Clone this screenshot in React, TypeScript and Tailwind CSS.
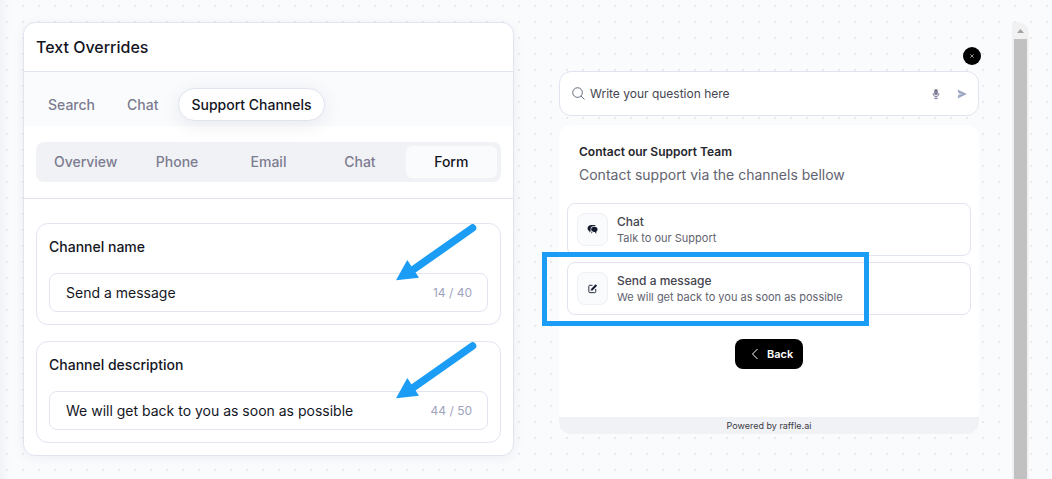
import React, { useState } from 'react';

interface ChannelField {
  id: string;
  label: string;
  value: string;
  max: number;
}

interface SupportChannel {
  id: string;
  title: string;
  description: string;
  icon: React.ReactNode;
  highlighted: boolean;
}

const SECTIONS = ['Search', 'Chat', 'Support Channels'];
const CHANNEL_TABS = ['Overview', 'Phone', 'Email', 'Chat', 'Form'];

const FIELDS: ChannelField[] = [
  { id: 'channel-name', label: 'Channel name', value: 'Send a message', max: 40 },
  {
    id: 'channel-description',
    label: 'Channel description',
    // stored with its trailing space, which counts towards the limit
    value: 'We will get back to you as soon as possible ',
    max: 50,
  },
];

const ChatBubblesIcon = () => (
  <svg viewBox="0 0 12 12" className="size-[11px]" fill="#141a2e" aria-hidden="true">
    <path d="M4.8 1h2.4c1.200 0 2.100.5 2.500 1.300H7.600c-2.200 0-3.700 1.300-3.700 3.300v2.600L2.600 9.400V7.600C1.400 7.100.6 6 .6 4.800.6 2.600 2.400 1 4.800 1Z" />
    <path d="M7.500 2.900h1c1.700 0 3 1.200 3 2.800 0 1.100-.5 2-1.400 2.500v2.300L8.500 8.600h-1C5.800 8.600 4.500 7.400 4.500 5.800s1.300-2.900 3-2.900Z" />
    <path d="M4.700 8.300 6 9.100l-1.300 1.300Z" />
  </svg>
);

const ComposeIcon = () => (
  <svg viewBox="0 0 12 12" className="size-[11px]" fill="none" stroke="#141a2e" aria-hidden="true">
    <path d="M6 2.500H3a1 1 0 0 0-1 1V9.500a1 1 0 0 0 1 1h5.500a1 1 0 0 0 1-1V6.500" />
    <path d="M5.200 7.300 10.200 2.200" strokeWidth="2.200" />
    <path d="M4.200 8.300l.4-1.700 1.300 1.300Z" fill="#141a2e" strokeWidth=".3" />
  </svg>
);

const CHANNELS: SupportChannel[] = [
  {
    id: 'chat',
    title: 'Chat',
    description: 'Talk to our Support',
    icon: <ChatBubblesIcon />,
    highlighted: false,
  },
  {
    id: 'form',
    title: 'Send a message',
    description: 'We will get back to you as soon as possible',
    icon: <ComposeIcon />,
    highlighted: true,
  },
];

const PointerArrow = () => (
  <svg
    viewBox="0 0 84 58"
    className="pointer-events-none absolute top-0 right-[22px] h-[58px] w-[84px]"
    aria-hidden="true"
  >
    <path d="M78.500 4 18 46.500" stroke="#1b9cf5" strokeWidth="7.600" strokeLinecap="round" fill="none" />
    <path d="M2 56.300 13.300 36 25 53.700Z" fill="#1b9cf5" />
  </svg>
);

const FieldCard: React.FC<{ field: ChannelField }> = ({ field }) => {
  const [value, setValue] = useState(field.value);

  return (
    <div className="relative rounded-xl border border-[#e2e4f0] p-3">
      <label htmlFor={field.id} className="block text-sm leading-[22px] font-medium text-[#14161f]">
        {field.label}
      </label>
      <div className="mt-[15px] flex h-[39px] items-center rounded-lg border border-[#e2e4f0] pr-[15px] pl-4">
        <input
          id={field.id}
          type="text"
          maxLength={field.max}
          value={value}
          onChange={(e) => setValue(e.target.value)}
          className="min-w-0 flex-1 bg-transparent text-sm leading-5 text-[#14161f] outline-none"
        />
        <span className="text-xs leading-5 text-[#a0a3bd]">
          {value.length} / {field.max}
        </span>
      </div>
      <PointerArrow />
    </div>
  );
};

const OverridesPanel = () => {
  const [section, setSection] = useState('Support Channels');
  const [tab, setTab] = useState('Form');

  return (
    <section className="self-start rounded-xl border border-[#e0e4f0] bg-white shadow-[0_2px_12px_rgba(20,30,60,0.06)]">
      <h1 className="border-b border-[#e0e4f0] p-3 text-base leading-6 font-medium text-[#14161f]">
        Text Overrides
      </h1>

      <nav className="flex h-[54px] items-start gap-2 bg-[#fafbfd] px-3 pt-4" aria-label="Sections">
        {SECTIONS.map((name) => (
          <button
            key={name}
            type="button"
            onClick={() => setSection(name)}
            className={
              section === name
                ? 'h-[33px] rounded-full border border-[#e0e4f0] bg-white px-3 text-sm font-medium text-[#14161f] shadow-[0_4px_20px_rgba(20,30,60,0.08)]'
                : 'h-[33px] px-3 text-sm font-medium text-[#7c7c90]'
            }
          >
            {name}
          </button>
        ))}
      </nav>

      <div className="border-b border-[#e0e4f0] px-3 py-4">
        <div className="grid h-10 grid-cols-5 rounded-lg bg-[#f1f2f6] p-1" role="tablist">
          {CHANNEL_TABS.map((name) => (
            <button
              key={name}
              type="button"
              role="tab"
              aria-selected={tab === name}
              onClick={() => setTab(name)}
              className={
                tab === name
                  ? 'rounded-md bg-[#fafbfd] text-sm font-medium text-[#14161f]'
                  : 'text-sm font-medium text-[#7c7c90]'
              }
            >
              {name}
            </button>
          ))}
        </div>
      </div>

      <div className="space-y-4 px-3 pt-6 pb-3">
        {FIELDS.map((field) => (
          <FieldCard key={field.id} field={field} />
        ))}
      </div>
    </section>
  );
};

const SearchBar = () => (
  <form
    className="mt-1.5 flex h-[45px] items-center rounded-xl border border-[#e0e4f0] bg-white pr-2 pl-3"
    onSubmit={(e) => e.preventDefault()}
  >
    <svg viewBox="0 0 14 14" className="size-[13px] shrink-0" fill="none" stroke="#5a6076" aria-hidden="true">
      <circle cx="6" cy="6" r="5.200" />
      <path d="m9.800 9.800 3.600 3.600" />
    </svg>
    <input
      type="text"
      aria-label="Your question"
      placeholder="Write your question here"
      className="ml-[5px] min-w-0 flex-1 bg-transparent text-xs text-[#45464f] outline-none placeholder:text-[#45464f]"
    />
    <button type="button" aria-label="Speak" className="flex size-4 items-center justify-center">
      <svg viewBox="0 0 10 12" className="h-3 w-2.5" aria-hidden="true">
        <rect x="3.200" y="1" width="3.600" height="6.200" rx="1.800" fill="#7c7c96" />
        <path d="M2.200 5v.8a2.800 2.800 0 0 0 5.600 0V5M5 8.500v2M3.200 10.600h3.600" fill="none" stroke="#7c7c96" strokeWidth=".9" />
      </svg>
    </button>
    <button type="submit" aria-label="Send" className="ml-2.5 flex size-4 items-center justify-center">
      <svg viewBox="0 0 10 10" className="size-2.5" fill="#9aa6c0" aria-hidden="true">
        <path d="M.6.6 9.800 5 .6 9.400 1.500 5.700 5.600 5 1.500 4.300Z" />
      </svg>
    </button>
  </form>
);

const ContactCard = () => (
  <section className="mt-[9px] flex h-[309px] flex-col rounded-xl bg-white">
    <div className="px-5 pt-[17px]">
      <h2 className="text-xs leading-5 font-semibold text-[#25262e]">Contact our Support Team</h2>
      <p className="mt-[3px] text-sm leading-5 text-[#62636f]">Contact support via the channels bellow</p>
    </div>

    <ul className="mt-[18px] space-y-1.5 px-2">
      {CHANNELS.map((channel) => (
        <li key={channel.id} className="relative">
          <button
            type="button"
            className="flex h-[53px] w-full items-center rounded-lg border border-[#e0e4f0] bg-white px-[9px] text-left"
          >
            <span className="flex h-[33px] w-[31px] items-center justify-center rounded-lg border border-[#eef0f5] bg-[#fafbfd]">
              {channel.icon}
            </span>
            <span className="ml-[9px]">
              <span className="block text-xs leading-4 font-medium text-[#45464f]">{channel.title}</span>
              <span className="block text-[11px] leading-4 text-[#62636f]">{channel.description}</span>
            </span>
          </button>
          {channel.highlighted && (
            <div className="pointer-events-none absolute -top-2.5 -left-[25px] h-[74px] w-[327px] border-[5px] border-[#1b9cf5]" />
          )}
        </li>
      ))}
    </ul>

    <button
      type="button"
      className="mt-6 flex h-[30px] w-[68px] items-center gap-2 self-center rounded-lg bg-black pl-4 text-[11px] font-semibold text-white"
    >
      <svg viewBox="0 0 8 12" className="h-3 w-2" fill="none" stroke="white" aria-hidden="true">
        <path d="M6.500 1 1.500 6l5 5" />
      </svg>
      Back
    </button>

    <footer className="mt-auto rounded-b-xl bg-[#f1f2f6] text-center text-[9px] leading-[17px] text-[#3a3b44]">
      Powered by <a href="#raffle">raffle.ai</a>
    </footer>
  </section>
);

const WidgetPreview = () => (
  <div className="ml-[45px] pt-[25px]">
    <button
      type="button"
      aria-label="Close"
      className="-mr-0.5 ml-auto flex size-[18px] items-center justify-center rounded-full bg-black"
    >
      <svg viewBox="0 0 4 4" className="size-1" stroke="#b8b8b8" strokeWidth=".8" aria-hidden="true">
        <path d="m.3.3 3.400 3.400M3.700.3.300 3.700" />
      </svg>
    </button>
    <SearchBar />
    <ContactCard />
  </div>
);

const ScrollRail = () => (
  <div className="ml-[33px] flex flex-col items-center rounded-tr-xl bg-[#f1f1f1]" aria-hidden="true">
    <svg viewBox="0 0 17 17" className="size-[17px]" fill="#a3a3a3">
      <path d="M5 11h7L8.500 7Z" />
    </svg>
    <div className="w-[13px] flex-1 bg-[#c1c1c1]" />
  </div>
);

const CanvasBackground = () => (
  <svg className="pointer-events-none absolute inset-0 h-full w-full" aria-hidden="true">
    <defs>
      <pattern id="dots" width="16" height="16" patternUnits="userSpaceOnUse">
        <rect x="6" y="5" width="2" height="2" fill="#e8eaee" />
      </pattern>
      <linearGradient id="edge">
        <stop offset="0" stopColor="#f2f3f6" />
        <stop offset="1" stopColor="#f2f3f6" stopOpacity="0" />
      </linearGradient>
    </defs>
    <rect width="10" height="100%" fill="url(#edge)" />
    <rect width="100%" height="100%" fill="url(#dots)" />
  </svg>
);

export default function App() {
  return (
    <main className="relative grid min-h-screen grid-cols-[491fr_465fr_50px] bg-[#fafbfd] px-[23px] pt-[22px] font-['Inter',sans-serif]">
      <CanvasBackground />
      <div className="relative">
        <OverridesPanel />
      </div>
      <div className="relative">
        <WidgetPreview />
      </div>
      <div className="relative grid">
        <ScrollRail />
      </div>
    </main>
  );
}
